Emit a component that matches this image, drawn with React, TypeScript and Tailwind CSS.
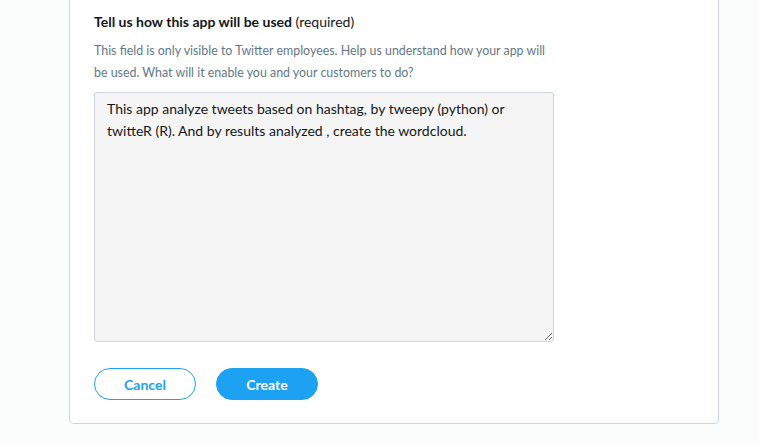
export default function App() {
  return (
    <div className="min-h-[445px] bg-[#fbfcfc] font-['Lato','Open_Sans',sans-serif] text-[#14171a]">
      <div className="ml-[69px] w-[650px] rounded-b-[5px] border border-t-0 border-[#ccd6dd] bg-white px-[24px] pb-[23px] pt-[11px]">
        <label className="block text-[14px] leading-[22px]">
          <span className="font-bold">Tell us how this app will be used</span> (required)
        </label>
        <p className="mt-[7px] w-[460px] text-[12.4px] leading-[22px] text-[#657786]">
          This field is only visible to Twitter employees. Help us understand how your app will be used. What will it enable
          you and your customers to do?
        </p>
        <textarea
          className="mt-[8px] block h-[250px] w-[460px] rounded-[3px] border border-[#ccd6dd] bg-[#f5f5f5] px-[12px] py-[5px] text-[14px] leading-[22px] text-[#14171a] outline-none"
          defaultValue="This app analyze tweets based on hashtag, by tweepy (python) or twitteR (R). And by results analyzed , create the wordcloud."
        />
        <div className="mt-[26px] flex gap-[20px]">
          <button className="h-[32px] w-[102px] rounded-full border border-[#1da1f2] bg-white text-[14px] font-bold text-[#1da1f2]">
            Cancel
          </button>
          <button className="h-[32px] w-[102px] rounded-full border border-[#1da1f2] bg-[#1da1f2] text-[14px] font-bold text-white">
            Create
          </button>
        </div>
      </div>
    </div>
  );
}
